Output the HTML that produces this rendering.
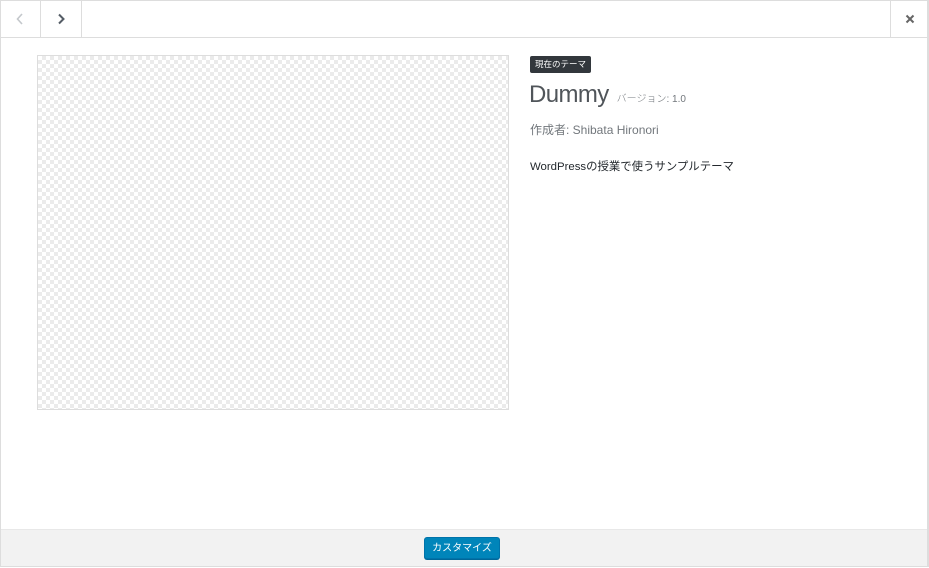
<!DOCTYPE html>
<html><head><meta charset="utf-8"><style>
*{margin:0;padding:0;box-sizing:border-box}
body{width:929px;height:568px;background:#fff;font-family:"Liberation Sans","Noto Sans CJK JP",sans-serif;position:relative;overflow:hidden}
.frame{position:absolute;left:0;top:0;width:929px;height:567px;border:1px solid #ddd;border-right:2px solid #ddd}
.hdr{position:absolute;left:0;top:0;width:929px;height:38px;border-bottom:1px solid #ddd}
.b{position:absolute;top:0;height:37px;border-right:1px solid #ddd;display:flex;align-items:center;justify-content:center}
.shot{position:absolute;left:37px;top:55px;width:472px;height:355px;border:1px solid #ddd;
background-color:#fff;background-image:linear-gradient(45deg,#ebebeb 25%,transparent 25%,transparent 75%,#ebebeb 75%),linear-gradient(45deg,#ebebeb 25%,transparent 25%,transparent 75%,#ebebeb 75%);background-size:8px 8px;background-position:0 0,4px 4px}
.badge{position:absolute;left:530px;top:56px;height:17px;padding:0 5px;background:#32373c;color:#fff;font-size:8.5px;line-height:17px;border-radius:2px}
.name{position:absolute;left:529px;top:81px;font-size:24px;font-weight:300;color:#50555a;letter-spacing:-0.6px}
.ver{font-size:10px;color:#72777c;margin-left:8px;letter-spacing:0}
.auth{position:absolute;left:530px;top:121px;font-size:12px;color:#72777c}
.desc{position:absolute;left:530px;top:158px;font-size:11.4px;color:#23282d}
.ftr{position:absolute;left:1px;top:529px;width:926px;height:37px;background:#f2f2f2;border-top:1px solid #e8e8e8}
.btn{position:absolute;left:424px;top:537px;width:76px;height:22px;background:#0085ba;border:1px solid #0073aa;border-radius:3px;color:#fff;font-size:10px;line-height:21px;text-align:center;box-shadow:0 1px 0 #006799}
</style></head><body>
<div class="hdr">
<div class="b" style="left:0;width:41px"><svg width="10" height="12" viewBox="0 0 10 12"><path d="M7 1 L2.5 6 L7 11" stroke="#c4c8cc" stroke-width="1.6" fill="none"/></svg></div>
<div class="b" style="left:41px;width:41px"><svg width="10" height="12" viewBox="0 0 10 12"><path d="M3 1.5 L7.5 6 L3 10.5" stroke="#555d66" stroke-width="2" fill="none"/></svg></div>
<div class="b" style="left:890px;width:39px;border-left:1px solid #ddd;border-right:none"><svg width="10" height="10" viewBox="0 0 10 10"><path d="M1.5 1.5 L8.5 8.5 M8.5 1.5 L1.5 8.5" stroke="#666" stroke-width="2"/></svg></div>
</div>
<div class="frame"></div>
<div class="shot"></div>
<div class="badge">現在のテーマ</div>
<div class="name">Dummy<span class="ver">バージョン: 1.0</span></div>
<div class="auth">作成者: Shibata Hironori</div>
<div class="desc">WordPressの授業で使うサンプルテーマ</div>
<div class="ftr"></div>
<div class="btn">カスタマイズ</div>
</body></html>
